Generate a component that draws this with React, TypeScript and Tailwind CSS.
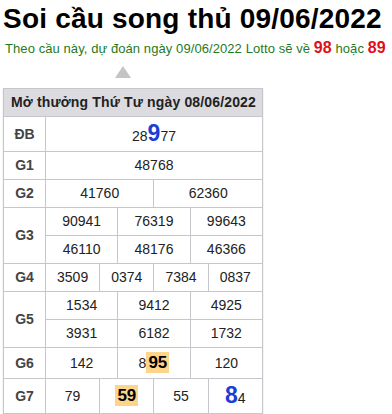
const data = [
  { label: "G1", rows: [["48768"]] },
  { label: "G2", rows: [["41760", "62360"]] },
  { label: "G3", rows: [["90941", "76319", "99643"], ["46110", "48176", "46366"]] },
  { label: "G4", rows: [["3509", "0374", "7384", "0837"]] },
  { label: "G5", rows: [["1534", "9412", "4925"], ["3931", "6182", "1732"]] },
]

const cell = "border border-[#c6c6cc] text-center"
const label = "border border-[#c6c6cc] text-center font-bold text-[#444]"

function Hl({ children }: { children: React.ReactNode }) {
  return <span className="inline-block bg-[#fcd48a] font-bold text-[17px] leading-[21px] px-[2px] text-black">{children}</span>
}

function Big({ children }: { children: React.ReactNode }) {
  return <span className="font-bold text-[23px] text-[#1a3fd6] leading-none">{children}</span>
}

export default function App() {
  return (
    <div className="bg-white min-h-[414px] font-['Liberation_Sans',Arial,sans-serif] text-[#222]">
      <h1 className="pl-[3px] pt-[2px] text-[28px] tracking-[0.2px] font-bold leading-[34px] text-black">
        Soi cầu song thủ 09/06/2022
      </h1>
      <p className="pl-[5px] pt-[2px] text-[13px] tracking-[0.08px] leading-[20px] text-[#1f7a1f]">
        Theo cầu này, dự đoán ngày 09/06/2022 Lotto sẽ về{" "}
        <b className="text-[16px] text-[#e0101a]">98</b> hoặc{" "}
        <b className="text-[16px] text-[#e0101a]">89</b>
      </p>
      <div className="ml-[115px] mt-[7px] w-0 h-0 border-l-[8px] border-r-[8px] border-b-[12px] border-l-transparent border-r-transparent border-b-[#c4c4c4]" />
      <table className="ml-[3px] mt-[10px] w-[260px] table-fixed border-collapse text-[14px] shadow-[0_1px_1px_rgba(0,0,0,0.25)]">
        <colgroup>
          <col className="w-[42px]" />
          {Array.from({ length: 12 }).map((_, i) => (
            <col key={i} />
          ))}
        </colgroup>
        <tbody>
          <tr className="h-[28px] bg-[#dcdce0]">
            <th colSpan={13} className="border border-[#c6c6cc] text-left pl-[7px] font-bold text-[14px] tracking-[0.15px] text-[#222]">
              Mở thưởng Thứ Tư ngày 08/06/2022
            </th>
          </tr>
          <tr className="h-[35px]">
            <td className={label}>ĐB</td>
            <td colSpan={12} className={cell}>
              28<Big>9</Big>77
            </td>
          </tr>
          {data.map((g) =>
            g.rows.map((r, ri) => (
              <tr key={g.label + ri} className="h-[28px]">
                {ri === 0 && (
                  <td rowSpan={g.rows.length} className={label}>
                    {g.label}
                  </td>
                )}
                {r.map((n, i) => (
                  <td key={i} colSpan={12 / r.length} className={cell}>
                    {n}
                  </td>
                ))}
              </tr>
            ))
          )}
          <tr className="h-[31px]">
            <td className={label}>G6</td>
            <td colSpan={4} className={cell}>142</td>
            <td colSpan={4} className={cell}>
              8<Hl>95</Hl>
            </td>
            <td colSpan={4} className={cell}>120</td>
          </tr>
          <tr className="h-[35px]">
            <td className={label}>G7</td>
            <td colSpan={3} className={cell}>79</td>
            <td colSpan={3} className={cell}>
              <Hl>59</Hl>
            </td>
            <td colSpan={3} className={cell}>55</td>
            <td colSpan={3} className={cell}>
              <Big>8</Big>4
            </td>
          </tr>
        </tbody>
      </table>
    </div>
  )
}
